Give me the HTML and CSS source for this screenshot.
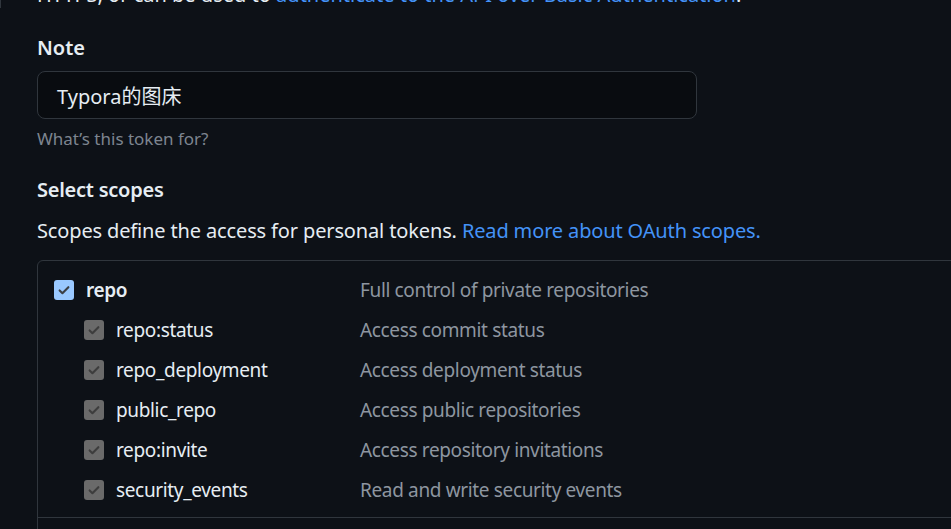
FILE: index.html
```html
<!DOCTYPE html>
<html lang="en">
<head>
<meta charset="utf-8">
<title>New personal access token</title>
<link rel="stylesheet" href="styles.css">
</head>
<body>
<div class="edge"></div>
<main class="page">
  <p class="intro">HTTPS, or can be used to <a href="#">authenticate to the API over Basic Authentication</a>.</p>

  <label class="label" for="note">Note</label>
  <div class="input"><span id="note">Typora的图床</span></div>
  <p class="hint">What’s this token for?</p>

  <h3 class="heading">Select scopes</h3>
  <p class="para">Scopes define the access for personal tokens. <a href="#">Read more about OAuth scopes.</a></p>

  <div class="scopes">
    <div class="group">
      <div class="row">
        <div class="name main"><span class="cb cb-on"><svg viewBox="0 0 16 16" width="14" height="14"><path d="M3 8.5l3.2 3.2L13 4.8" fill="none" stroke="#3b3f45" stroke-width="2.4" stroke-linecap="round" stroke-linejoin="round"/></svg></span><strong>repo</strong></div>
        <div class="desc">Full control of private repositories</div>
      </div>
      <div class="row">
        <div class="name sub"><span class="cb cb-dis"><svg viewBox="0 0 16 16" width="14" height="14"><path d="M3 8.5l3.2 3.2L13 4.8" fill="none" stroke="#3d3d3d" stroke-width="2.4" stroke-linecap="round" stroke-linejoin="round"/></svg></span>repo:status</div>
        <div class="desc">Access commit status</div>
      </div>
      <div class="row">
        <div class="name sub"><span class="cb cb-dis"><svg viewBox="0 0 16 16" width="14" height="14"><path d="M3 8.5l3.2 3.2L13 4.8" fill="none" stroke="#3d3d3d" stroke-width="2.4" stroke-linecap="round" stroke-linejoin="round"/></svg></span>repo_deployment</div>
        <div class="desc">Access deployment status</div>
      </div>
      <div class="row">
        <div class="name sub"><span class="cb cb-dis"><svg viewBox="0 0 16 16" width="14" height="14"><path d="M3 8.5l3.2 3.2L13 4.8" fill="none" stroke="#3d3d3d" stroke-width="2.4" stroke-linecap="round" stroke-linejoin="round"/></svg></span>public_repo</div>
        <div class="desc">Access public repositories</div>
      </div>
      <div class="row">
        <div class="name sub"><span class="cb cb-dis"><svg viewBox="0 0 16 16" width="14" height="14"><path d="M3 8.5l3.2 3.2L13 4.8" fill="none" stroke="#3d3d3d" stroke-width="2.4" stroke-linecap="round" stroke-linejoin="round"/></svg></span>repo:invite</div>
        <div class="desc">Access repository invitations</div>
      </div>
      <div class="row">
        <div class="name sub"><span class="cb cb-dis"><svg viewBox="0 0 16 16" width="14" height="14"><path d="M3 8.5l3.2 3.2L13 4.8" fill="none" stroke="#3d3d3d" stroke-width="2.4" stroke-linecap="round" stroke-linejoin="round"/></svg></span>security_events</div>
        <div class="desc">Read and write security events</div>
      </div>
    </div>
    <div class="group">
      <div class="row">
        <div class="name main"><span class="cb cb-off"></span><strong>workflow</strong></div>
        <div class="desc">Update GitHub Action workflows</div>
      </div>
    </div>
  </div>
</main>
</body>
</html>
```

FILE: styles.css
```css
html, body {
  margin: 0;
  padding: 0;
  background: #0d1117;
  height: 100%;
  overflow: hidden;
}
body {
  font-family: "Noto Sans", "Noto Sans CJK SC", sans-serif;
  color: #e6edf3;
  font-size: 20px;
  position: relative;
}
.edge {
  position: absolute;
  left: 0;
  top: 0;
  width: 1px;
  height: 8px;
  background: #30363d;
}
.page {
  padding-left: 37px;
  margin-top: -20px;
}
a {
  color: #4493f8;
  text-decoration: none;
}
p { margin: 0; }
.intro {
  line-height: 30px;
  color: #e6edf3;
}
.label {
  display: block;
  margin-top: 23px;
  line-height: 30px;
  font-weight: 600;
}
.input {
  margin-top: 8px;
  width: 620px;
  height: 46px;
  border: 1px solid #30363d;
  border-radius: 8px;
  background: #090c10;
  padding: 0 19px;
  display: flex;
  align-items: center;
}
.hint {
  margin-top: 8px;
  font-size: 17px;
  line-height: 24px;
  color: #7d8590;
}
.heading {
  margin: 24px 0 0;
  font-size: 20px;
  font-weight: 600;
  line-height: 30px;
  letter-spacing: -0.25px;
}
.para {
  margin-top: 11px;
  line-height: 30px;
  letter-spacing: -0.14px;
}
.scopes {
  margin-top: 14px;
  width: 1100px;
  border: 1px solid #30363d;
  border-radius: 6px;
}
.group {
  padding: 9px 0 7px;
  border-bottom: 1px solid #30363d;
}
.row {
  display: flex;
  align-items: center;
  height: 40px;
  padding-left: 16px;
  font-size: 19px;
  letter-spacing: -0.35px;
}
.name {
  width: 306px;
  display: flex;
  align-items: center;
  gap: 12px;
  color: #e6edf3;
}
.name.sub {
  padding-left: 30px;
  width: 276px;
}
.name strong { font-weight: 600; }
.desc {
  color: #8d96a0;
}
.cb {
  width: 20px;
  height: 20px;
  border-radius: 3px;
  display: flex;
  align-items: center;
  justify-content: center;
  flex: none;
}
.cb-on { background: #99c8ff; }
.cb-dis { background: #6a6a6a; }
.cb-off { border: 1px solid #8d96a0; box-sizing: border-box; }
```
